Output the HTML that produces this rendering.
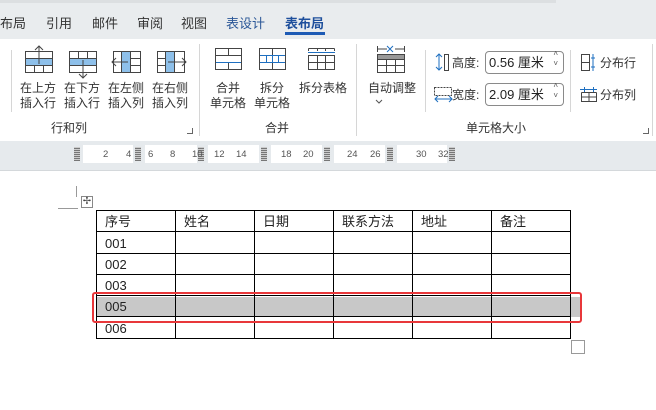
<!DOCTYPE html>
<html><head><meta charset="utf-8"><style>
*{margin:0;padding:0;box-sizing:border-box}
body{width:656px;height:410px;overflow:hidden;background:#fff;font-family:"Liberation Sans","Noto Sans CJK SC",sans-serif;position:relative;color:#222}
.a{position:absolute;white-space:nowrap}
.tab{top:13px;font-size:13px;color:#333}
.lbl{font-size:12px;text-align:center;line-height:15px;color:#333}
.sep{position:absolute;width:1px;background:#d6d6d6}
.rw{position:absolute;top:145px;height:18px;background:#fff}
.mk{position:absolute;top:147px;width:6px;height:14px;background:repeating-linear-gradient(0deg,#777 0 1px,#ccc 1px 2px)}
.rn{position:absolute;top:149px;font-size:9.5px;color:#555}
td{border:1px solid #000;font-size:13px;padding:0 0 0 8px;height:21.3px;vertical-align:bottom;line-height:18px}
</style></head><body>
<div class="a" style="left:0;top:0;width:656px;height:39px;background:#e9ecee"></div>
<div class="a" style="left:0;top:0;width:556px;height:3px;background:#dcdfe1"></div>
<div class="a tab" style="left:0">布局</div>
<div class="a tab" style="left:46px">引用</div>
<div class="a tab" style="left:92px">邮件</div>
<div class="a tab" style="left:137px">审阅</div>
<div class="a tab" style="left:181px">视图</div>
<div class="a tab" style="left:226px;color:#2b5797">表设计</div>
<div class="a tab" style="left:285px;color:#1e4f9c;font-weight:bold">表布局</div>
<div class="a" style="left:285px;top:32px;width:40px;height:3px;background:#1e5bb5"></div>

<div class="sep" style="left:11px;top:50px;height:62px"></div>
<div class="sep" style="left:199px;top:44px;height:92px"></div>
<div class="sep" style="left:356px;top:44px;height:92px"></div>
<div class="sep" style="left:425px;top:50px;height:62px"></div>
<div class="sep" style="left:570px;top:50px;height:62px"></div>
<div class="sep" style="left:652px;top:44px;height:92px"></div>

<svg class="a" style="left:0;top:40px" width="656" height="40" fill="none" stroke="#444" stroke-width="1">
<rect x="25.5" y="11.5" width="27" height="21"/><rect x="26" y="18" width="26" height="7" fill="#8ec0ea" stroke="none"/><path d="M25.5 18.5H52.5M25.5 25.5H52.5M34.5 25.5V32.5M43.5 25.5V32.5"/><path d="M39 24V6M35 10l4-4 4 4" fill="#fff"/>
<rect x="69.5" y="11.5" width="27" height="21"/><rect x="70" y="18" width="26" height="7" fill="#8ec0ea" stroke="none"/><path d="M69.5 18.5H96.5M69.5 25.5H96.5M78.5 11.5V18.5M87.5 11.5V18.5"/><path d="M83 20V38M79 34l4 4 4-4"/>
<rect x="113.5" y="11.5" width="27" height="21"/><rect x="122" y="12" width="8" height="20" fill="#8ec0ea" stroke="none"/><path d="M121.5 11.5V32.5M130.5 11.5V32.5M130.5 18.5H140.5M130.5 25.5H140.5M128 22H112M116 18l-4 4 4 4"/>
<rect x="157.5" y="11.5" width="27" height="21"/><rect x="166" y="12" width="8" height="20" fill="#8ec0ea" stroke="none"/><path d="M165.5 11.5V32.5M174.5 11.5V32.5M157.5 18.5H165.5M157.5 25.5H165.5M168 22H186M182 18l4 4-4 4"/>
<rect x="215.5" y="8.5" width="26" height="21"/><path d="M215.5 15.5H241.5M228.5 8.5V15.5M228.5 22.5V29.5" /><path d="M216 22.5H241" stroke="#1e6fc0"/>
<rect x="259.5" y="8.5" width="26" height="21"/><path d="M259.5 15.5H285.5M272.5 8.5V15.5M272.5 22.5V29.5M259.5 22.5H285.5"/><path d="M260 15.5H285M260 22.5H285M266.5 16V22M272.5 16V22M278.5 16V22" stroke="#1e6fc0"/>
<path d="M308 12.5H335" stroke="#1e6fc0"/><rect x="308.5" y="15.5" width="26" height="14"/><path d="M308.5 22.5H334.5M317.5 15.5V29.5M325.5 15.5V29.5M308.5 8.5H334.5M317.5 8.5V11M325.5 8.5V11M308.5 8.5V11M334.5 8.5V11"/>
<path d="M377.5 6V12M404.5 6V12M378 9H387M395 9H404"/><path d="M387 6l6 6M393 6l-6 6" stroke="#1e6fc0"/>
<rect x="377.5" y="14.5" width="27" height="18"/><rect x="378" y="15" width="26" height="4" fill="#999" stroke="none"/><path d="M377.5 19.5H404.5M377.5 25.5H404.5M386.5 19.5V32.5M395.5 19.5V32.5"/>
<path d="M439 14V30M436 17l3-3 3 3M436 27l3 3 3-3" stroke="#1e6fc0"/><rect x="444.5" y="14.5" width="4" height="16"/>
<rect x="581.5" y="14.5" width="8" height="16"/><path d="M581.5 22.5H589.5"/><path d="M593 14V31M591 18H595M591 27H595" stroke="#1e6fc0"/>
</svg>
<svg class="a" style="left:0;top:80px" width="656" height="40" fill="none" stroke="#444">
<path d="M434.5 7.5H451.5V15.5H434.5Z" stroke-dasharray="2 1"/><path d="M435 19H452M438 16l-3 3 3 3M449 16l3 3-3 3" stroke="#1e6fc0"/>
<path d="M581.5 12.5H596.5M581.5 12.5V21.5H596.5V12.5M589 12.5V21.5M581.5 17H596.5"/><path d="M580 9.5H597M584.5 7V12M593.5 7V12" stroke="#1e6fc0"/>
<path d="M376 20l3 3 3-3" stroke="#555"/>
</svg>

<div class="a lbl" style="left:16px;top:81px;width:44px">在上方<br>插入行</div>
<div class="a lbl" style="left:60px;top:81px;width:44px">在下方<br>插入行</div>
<div class="a lbl" style="left:104px;top:81px;width:44px">在左侧<br>插入列</div>
<div class="a lbl" style="left:148px;top:81px;width:44px">在右侧<br>插入列</div>
<div class="a lbl" style="left:206px;top:81px;width:44px">合并<br>单元格</div>
<div class="a lbl" style="left:250px;top:81px;width:44px">拆分<br>单元格</div>
<div class="a lbl" style="left:294px;top:81px;width:58px">拆分表格</div>
<div class="a lbl" style="left:362px;top:81px;width:60px">自动调整</div>
<div class="a lbl" style="left:452px;top:56px">高度:</div>
<div class="a lbl" style="left:452px;top:88px">宽度:</div>
<div class="a" style="left:485px;top:51px;width:79px;height:23px;border:1px solid #8a8a8a;border-radius:4px;font-size:13px;line-height:21px;padding-left:3px">0.56 厘米<span style="position:absolute;right:5px;top:-3px;font-size:8px;line-height:10px;color:#555">˄<br>˅</span></div>
<div class="a" style="left:485px;top:83px;width:79px;height:23px;border:1px solid #8a8a8a;border-radius:4px;font-size:13px;line-height:21px;padding-left:3px">2.09 厘米<span style="position:absolute;right:5px;top:-3px;font-size:8px;line-height:10px;color:#555">˄<br>˅</span></div>
<div class="a lbl" style="left:600px;top:56px">分布行</div>
<div class="a lbl" style="left:600px;top:88px">分布列</div>
<div class="a lbl" style="left:51px;top:121px">行和列</div>
<div class="a lbl" style="left:265px;top:121px">合并</div>
<div class="a lbl" style="left:466px;top:121px">单元格大小</div>
<div class="a" style="left:187px;top:128px;width:6px;height:6px;border-right:1px solid #666;border-bottom:1px solid #666"></div>
<div class="a" style="left:643px;top:128px;width:6px;height:6px;border-right:1px solid #666;border-bottom:1px solid #666"></div>

<div class="a" style="left:0;top:141px;width:656px;height:30px;background:#e6eaed;border-bottom:1px solid #d4d8db"></div>
<div class="rw" style="left:83px;width:50px"></div><div class="rw" style="left:145px;width:52px"></div><div class="rw" style="left:208px;width:51px"></div><div class="rw" style="left:271px;width:51px"></div><div class="rw" style="left:334px;width:51px"></div><div class="rw" style="left:397px;width:50px"></div>
<div class="mk" style="left:74px"></div><div class="mk" style="left:135px"></div><div class="mk" style="left:198px"></div><div class="mk" style="left:261px"></div><div class="mk" style="left:324px"></div><div class="mk" style="left:387px"></div><div class="mk" style="left:449px"></div>
<div class="rn" style="left:103px">2</div><div class="rn" style="left:126px">4</div><div class="rn" style="left:148px">6</div><div class="rn" style="left:170px">8</div><div class="rn" style="left:192px">10</div><div class="rn" style="left:214px">12</div><div class="rn" style="left:236px">14</div><div class="rn" style="left:281px">18</div><div class="rn" style="left:303px">20</div><div class="rn" style="left:347px">24</div><div class="rn" style="left:370px">26</div><div class="rn" style="left:416px">30</div><div class="rn" style="left:438px">32</div>

<div class="a" style="left:76px;top:186px;width:1px;height:11px;background:#999"></div>
<div class="a" style="left:81px;top:196px;width:12px;height:12px;border:1px solid #888;font-size:10px;line-height:10px;text-align:center;color:#444">✢</div>
<div class="a" style="left:58px;top:208px;width:20px;height:1px;background:#999"></div>
<div class="a" style="left:96px;top:297px;width:484px;height:20px;background:#c8c8c8"></div>
<table class="a" style="left:96px;top:210px;border-collapse:collapse;width:475px">
<tr><td style="width:79px">序号</td><td style="width:79px">姓名</td><td style="width:79px">日期</td><td style="width:79px">联系方法</td><td style="width:79px">地址</td><td>备注</td></tr>
<tr><td>001</td><td></td><td></td><td></td><td></td><td></td></tr>
<tr><td>002</td><td></td><td></td><td></td><td></td><td></td></tr>
<tr><td>003</td><td></td><td></td><td></td><td></td><td></td></tr>
<tr><td>005</td><td></td><td></td><td></td><td></td><td></td></tr>
<tr><td>006</td><td></td><td></td><td></td><td></td><td></td></tr>
</table>
<div class="a" style="left:92px;top:292px;width:490px;height:31px;border:2px solid #e8373a;border-radius:3px"></div>
<div class="a" style="left:571px;top:340px;width:14px;height:14px;border:1px solid #999"></div>
</body></html>
